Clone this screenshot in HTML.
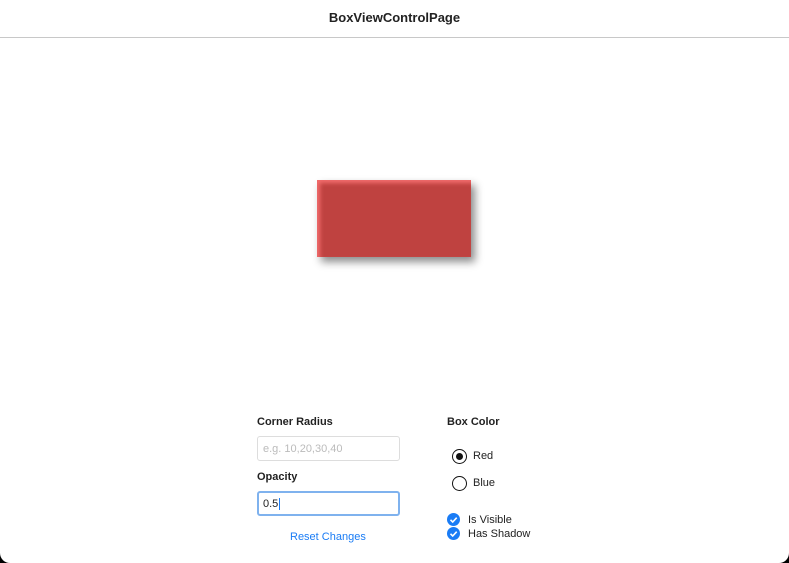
<!DOCTYPE html>
<html><head><style>
body{margin:0;width:789px;height:563px;background:#000;font-family:"Liberation Sans",sans-serif;overflow:hidden}
.win{position:absolute;left:0;top:0;width:789px;height:563px;background:#fff;border-radius:0 0 10px 10px;overflow:hidden}
.hdr{position:absolute;left:0;top:0;width:789px;height:37px;border-bottom:1px solid #c8c8c8;text-align:center;line-height:36px;font-size:13px;font-weight:bold;color:#222}
.box{position:absolute;left:317px;top:180px;width:154px;height:77px;background:#bf4240;box-shadow:inset 3px 3px 4px rgba(255,120,120,.8),4px 5px 8px rgba(0,0,0,.45)}
.lbl{position:absolute;font-size:11px;font-weight:bold;color:#222}
.inp{position:absolute;left:257px;width:143px;height:25px;border:1px solid #ddd;border-radius:3px;font-size:11px;line-height:24px;padding-left:5px;box-sizing:border-box}
.t{position:absolute;font-size:11px;color:#222}
.radio{position:absolute;left:452px;width:15px;height:15px;border:1.5px solid #111;border-radius:50%;box-sizing:border-box}
.chk{position:absolute;left:447px;width:13px;height:13px;border-radius:50%;background:#1a7cf5}
</style></head><body><div class="win">
<div class="hdr">BoxViewControlPage</div>
<div class="box"></div>
<div class="lbl" style="left:257px;top:416px">Corner Radius</div>
<div class="inp" style="top:436px;color:#bbb">e.g. 10,20,30,40</div>
<div class="lbl" style="left:257px;top:471px">Opacity</div>
<div class="inp" style="top:491px;border:2px solid #7fb2ee;padding-left:4px;line-height:22px;color:#222">0.5<span style="border-left:1px solid #1a7cf5;margin-left:1px"></span></div>
<div class="t" style="left:290px;top:531px;color:#1a7cf5">Reset Changes</div>
<div class="lbl" style="left:447px;top:416px">Box Color</div>
<div class="radio" style="top:449px"><div style="position:absolute;left:2.5px;top:2.5px;width:7px;height:7px;border-radius:50%;background:#111"></div></div>
<div class="t" style="left:473px;top:450px">Red</div>
<div class="radio" style="top:476px"></div>
<div class="t" style="left:473px;top:477px">Blue</div>
<div class="chk" style="top:513px"><svg width="13" height="13"><path d="M3.5 6.8l2.2 2.2 4-4.3" stroke="#fff" stroke-width="1.6" fill="none"/></svg></div>
<div class="t" style="left:468px;top:514px">Is Visible</div>
<div class="chk" style="top:527px"><svg width="13" height="13"><path d="M3.5 6.8l2.2 2.2 4-4.3" stroke="#fff" stroke-width="1.6" fill="none"/></svg></div>
<div class="t" style="left:468px;top:528px">Has Shadow</div>
</div></body></html>
